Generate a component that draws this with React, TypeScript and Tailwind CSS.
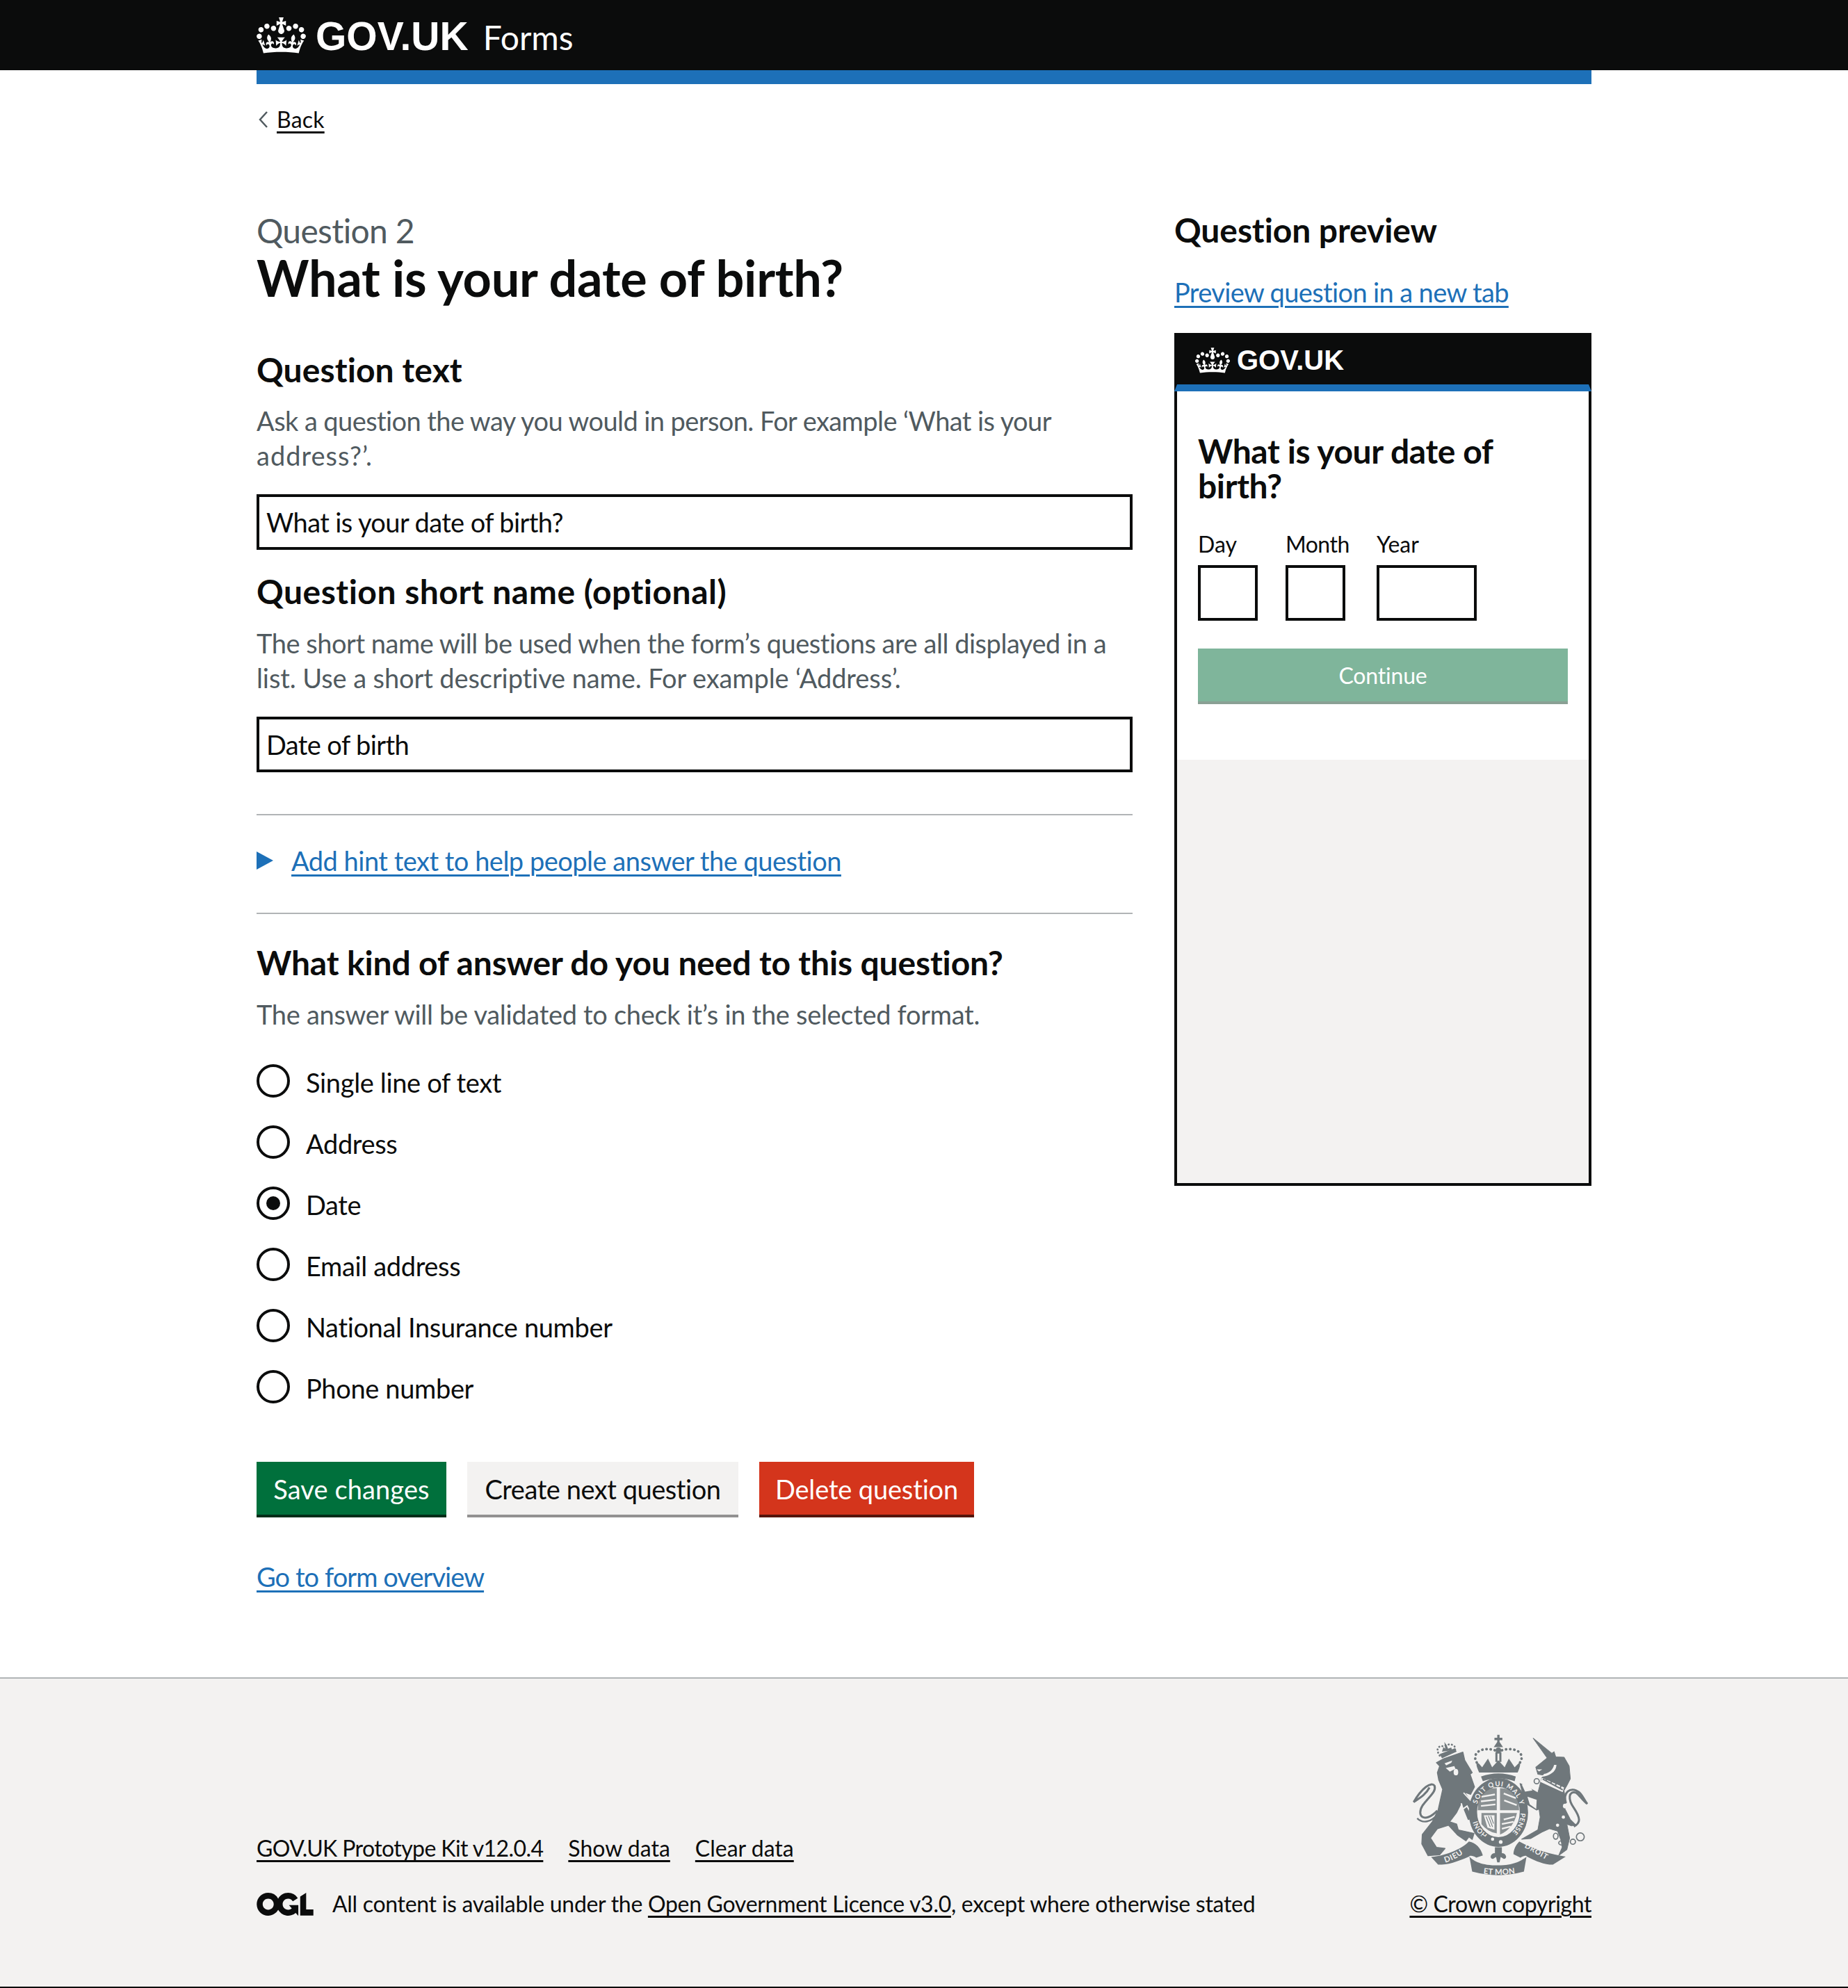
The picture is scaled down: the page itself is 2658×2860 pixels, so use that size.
import React from "react";

const crown = "M25 30.2c3.5 1.5 7.7-.2 9.1-3.7 1.5-3.6-.2-7.8-3.9-9.2-3.6-1.4-7.6.3-9.1 3.9-1.4 3.5.3 7.5 3.9 9zM9 39.5c3.6 1.5 7.8-.2 9.2-3.7 1.5-3.6-.2-7.8-3.9-9.1-3.6-1.5-7.6.2-9.1 3.8-1.4 3.5.3 7.5 3.8 9zM4.4 57.2c3.5 1.5 7.7-.2 9.1-3.8 1.5-3.6-.2-7.7-3.9-9.1-3.5-1.5-7.6.3-9.1 3.8-1.4 3.5.3 7.6 3.9 9.1zm38.3-21.4c3.5 1.5 7.7-.2 9.1-3.8 1.5-3.6-.2-7.7-3.9-9.1-3.6-1.5-7.6.3-9.1 3.8-1.3 3.6.4 7.7 3.9 9.1zm64.4-5.6c-3.6 1.5-7.8-.2-9.1-3.7-1.5-3.6.2-7.8 3.8-9.2 3.6-1.4 7.7.3 9.2 3.9 1.3 3.5-.4 7.5-3.9 9zm15.9 9.3c-3.6 1.5-7.7-.2-9.1-3.7-1.5-3.6.2-7.8 3.7-9.1 3.6-1.5 7.7.2 9.2 3.8 1.5 3.5-.3 7.5-3.8 9zm4.7 17.7c-3.6 1.5-7.8-.2-9.2-3.8-1.5-3.6.2-7.7 3.9-9.1 3.6-1.5 7.7.3 9.2 3.8 1.3 3.5-.4 7.6-3.9 9.1zM89.3 35.8c-3.6 1.5-7.8-.2-9.2-3.8-1.4-3.6.2-7.7 3.9-9.1 3.6-1.5 7.7.3 9.2 3.8 1.4 3.6-.3 7.7-3.9 9.1zM69.7 17.7l8.9 4.7V9.3l-8.9 2.8c-.2-.3-.5-.6-.9-.9L72.4 0H59.6l3.6 11.2c-.3.3-.6.5-.9.9l-8.8-2.8v13.1l8.8-4.7c.3.3.6.7.9.9l-5 15.4v.1c-.2.8-.4 1.6-.4 2.4 0 4.1 3.1 7.5 7 8.1h.2c.3 0 .7.1 1 .1.4 0 .7 0 1-.1h.2c4-.6 7.1-4.1 7.1-8.1 0-.8-.1-1.7-.4-2.4V34l-5.1-15.4c.4-.2.7-.6 1-.9zM66 92.8c16.9 0 32.8 1.1 47.1 3.2 4-16.9 8.9-26.7 14-33.5l-9.6-3.4c1 4.9 1.1 7.2 0 10.2-1.5-1.4-3-4.3-4.2-8.7L108.6 76c2.8-2 5-3.2 7.5-3.3-4.4 9.4-10 11.9-13.6 11.2-4.3-.8-6.3-4.6-5.6-7.9 1-4.7 5.7-5.9 8-.5 4.3-8.7-3-11.4-7.6-8.8 7.1-7.2 7.9-13.5 2.1-21.1-8 6.1-8.1 12.3-4.5 20.8-4.7-5.4-12.1-2.5-9.5 6.2 3.4-5.2 7.9-2 7.2 3.1-.6 4.3-6.4 7.8-13.5 7.2-10.3-.9-10.9-8-11.2-13.8 2.5-.5 7.1 1.8 11 7.3L80.2 60c-4.1 4.4-8 5.3-12.3 5.4 1.4-4.4 8-11.6 8-11.6H55.5s6.4 7.2 7.9 11.6c-4.2-.1-8-1-12.3-5.4l1.4 16.4c3.9-5.5 8.5-7.7 10.9-7.3-.3 5.8-.9 12.8-11.1 13.8-7.2.6-12.9-2.9-13.5-7.2-.7-5 3.8-8.3 7.1-3.1 2.7-8.7-4.6-11.6-9.4-6.2 3.7-8.5 3.6-14.7-4.6-20.8-5.8 7.6-5 13.9 2.2 21.1-4.7-2.6-11.9.1-7.7 8.8 2.3-5.5 7.1-4.2 8.1.5.7 3.3-1.3 7.1-5.7 7.9-3.5.7-9-1.8-13.5-11.2 2.5.1 4.7 1.3 7.5 3.3l-4.7-15.4c-1.2 4.4-2.7 7.2-4.3 8.7-1.1-3-.9-5.3 0-10.2l-9.5 3.4c5 6.9 9.9 16.7 14 33.5 14.8-2.1 30.8-3.2 47.7-3.2z";

const Crown = ({ w, h }: { w: number; h: number }) => (
  <svg viewBox="0 0 132 97" width={w} height={h} className="shrink-0 text-white">
    <path fill="currentColor" fillRule="evenodd" d={crown} />
  </svg>
);

const Ogl = () => (
  <svg viewBox="0 0 483.2 195.7" width="82" height="33" className="shrink-0 text-[#0b0c0c]">
    <path fill="currentColor" d="M421.5 142.8V.1l-50.7 32.3v161.1h112.4v-50.7zm-122.3-9.6A47.12 47.12 0 0 1 221 97.8c0-26 21.1-47.1 47.1-47.1 16.7 0 31.4 8.7 39.7 21.8l42.7-27.2A97.63 97.63 0 0 0 268.1 0c-36.5 0-68.3 20.1-85.1 49.7A98 98 0 0 0 97.8 0C43.9 0 0 43.9 0 97.8s43.9 97.8 97.8 97.8c36.5 0 68.3-20.1 85.1-49.7a97.76 97.76 0 0 0 149.6 25.4l19.4 22.2h3v-87.8h-80l24.3 27.5zM97.8 145c-26 0-47.1-21.1-47.1-47.1s21.1-47.1 47.1-47.1 47.2 21 47.2 47S123.8 145 97.8 145" />
  </svg>
);

const G = "#6f777b";
const BG = "#f3f2f1";
const tf = { fontFamily: "Lato, sans-serif", fontWeight: 700, fill: BG };
const Arms = () => (
  <svg viewBox="150 100 770 620" width="257" height="207" className="shrink-0 mr-[2px]" fill={G}>
    <defs>
      <path id="ringTop" d="M429 438 A96 112 0 0 1 621 438" />
      <path id="ringSide" d="M621 442 A96 112 0 0 1 560 542" />
      <path id="ringBot" d="M478 536 A96 112 0 0 1 429 446" />
      <path id="rbL" d="M296 656 Q350 640 398 598" />
      <path id="rbC" d="M438 700 Q525 716 612 700" />
      <path id="rbR" d="M636 590 Q700 625 760 660" />
    </defs>
    {/* lion crown */}
    <path d="M272 195 C252 165 268 150 290 155 C310 140 345 145 338 172" fill="none" stroke={G} strokeWidth="8" strokeLinecap="round" strokeDasharray="1 13" />
    <path d="M272 188 L338 163 L345 178 L282 206 Z" />
    <path d="M282 178 L288 158 L296 165 L292 136 L302 150 L308 165 L322 160 L325 172 Z" />
    {/* lion body */}
    <path d="M258 225 L290 208 L372 180 L380 215 L412 268 L403 275 L422 330 L405 362 L378 352 L428 425 L416 462 L395 470 L378 428 L366 398 L345 440 L315 480 L345 490 L352 515 L420 530 L412 556 L398 545 L385 562 L350 538 L310 495 L262 510 L232 550 L258 590 L295 595 L272 622 L222 626 L195 575 L197 535 L240 480 L265 430 L285 340 L268 300 L262 268 L272 240 Z" stroke={G} strokeWidth="4" strokeLinejoin="round" />
    <path d="M293 228 L326 216 L322 226 L300 237 Z M298 248 L335 240 L340 252 L316 264 Z" fill={BG} />
    <ellipse cx="342" cy="266" rx="10" ry="14" fill={BG} />
    <path d="M262 432 C205 490 170 455 198 410 C230 368 258 350 250 325 C235 305 195 335 160 395 C195 372 215 358 228 332" fill="none" stroke={G} strokeWidth="9" />
    <path d="M175 465 C200 490 235 480 262 450" fill="none" stroke={G} strokeWidth="7" />
    <path d="M375 355 L425 410" stroke={BG} strokeWidth="5" />
    <path d="M365 400 L372 425 L390 412 L402 435" stroke={BG} strokeWidth="6" fill="none" />
    {/* centre crown */}
    <path d="M520 105 H530 V118 H542 V128 H530 V136 L545 158 H505 L520 136 V128 H508 V118 H520 Z" />
    <circle cx="525" cy="172" r="12" />
    <rect x="512" y="180" width="26" height="42" />
    <rect x="521" y="186" width="8" height="32" fill={BG} />
    <path d="M432 225 C405 180 460 155 510 172 M618 225 C645 180 590 155 540 172" fill="none" stroke={G} strokeWidth="11" strokeLinecap="round" strokeDasharray="1 17" />
    <path d="M442 268 C430 240 425 225 440 228 L455 245 L480 208 L498 245 L525 215 L552 245 L570 208 L595 245 L612 228 C622 225 620 240 608 268 Z" />
    <path d="M450 285 Q525 258 600 285 L595 305 Q525 282 458 305 Z" />
    {/* garter */}
    <ellipse cx="525" cy="440" rx="128" ry="148" />
    <ellipse cx="525" cy="438" rx="92" ry="108" fill={BG} />
    <g opacity="0.8">
      <path d="M440 350 Q480 335 518 335 L518 430 L436 430 Z M532 335 Q570 335 610 360 L614 430 L532 430 Z M452 442 L518 442 L518 530 Q480 525 452 490 Z M532 442 L605 442 Q590 510 532 535 Z" />
    </g>
    <path d="M452 372 L510 362 M450 392 L512 385 M450 412 L512 405 M548 358 L600 378 M550 388 L604 408 M548 470 L595 458 M540 490 L590 480 M540 510 L578 500" stroke={BG} strokeWidth="7" />
    <path d="M462 452 L508 452 L508 514 L478 505 Z" fill={BG} />
    <path d="M472 458 L490 502 M482 455 L500 502 M492 455 L504 488" stroke={G} strokeWidth="3" />
    <text fontSize="29" {...tf}><textPath href="#ringTop" startOffset="34" textLength="262">SOIT QUI MAL Y</textPath></text>
    <text fontSize="29" {...tf} letterSpacing="1"><textPath href="#ringSide">PENSE</textPath></text>
    <text fontSize="29" {...tf}><textPath href="#ringBot">HONI</textPath></text>
    <path d="M450 535 C470 592 580 592 600 535 L580 545 C555 565 495 565 470 545 Z" />
    <circle cx="500" cy="555" r="7" fill={BG} />
    <circle cx="535" cy="567" r="8" fill={BG} />
    {/* unicorn */}
    <path d="M675 120 L755 185 L765 178 L772 200 L808 202 L830 240 L835 295 L822 320 L808 345 L815 400 L812 425 L835 470 L860 495 L840 498 L820 490 L832 550 L820 600 L785 625 L800 590 L795 560 L780 520 L745 510 L712 525 L665 552 L625 555 L660 535 L695 515 L705 460 L700 425 L690 430 L640 400 L618 315 L650 330 L695 355 L712 290 L765 250 L725 280 L695 275 L686 245 L735 205 Z" stroke={G} strokeWidth="3" strokeLinejoin="round" />
    <path d="M775 235 C775 265 745 282 712 286 L722 274 C745 270 760 255 765 235 Z M690 254 L714 254 L700 263 Z" fill={BG} />
    <path d="M650 372 L690 385 L688 425 L660 405 Z M626 320 L650 312 L672 345 L640 350 Z" fill={BG} />
    <path d="M712 290 L808 332 L802 352 L706 308 Z" fill={BG} />
    <path d="M716 296 L802 342 M730 306 L736 288 M750 316 L756 300 M770 326 L776 310 M790 338 L796 322" stroke={G} strokeWidth="6" />
    <circle cx="690" cy="305" r="11" fill={BG} stroke={G} strokeWidth="5" />
    <circle cx="813" cy="412" r="10" fill={BG} />
    <circle cx="805" cy="460" r="7" fill={BG} />
    <circle cx="780" cy="495" r="7" fill={BG} />
    <g fill="none" stroke={G} strokeWidth="5">
      <ellipse cx="772" cy="542" rx="10" ry="13" />
      <ellipse cx="797" cy="571" rx="12" ry="9" />
      <circle cx="846" cy="566" r="11" />
      <circle cx="878" cy="545" r="17" />
    </g>
    <path d="M816 400 C802 350 835 335 860 345 C885 355 890 380 908 403 C885 385 875 365 860 355 C825 345 825 385 850 420 C880 465 880 485 850 500" fill="none" stroke={G} strokeWidth="9" />
    {/* ribbon */}
    <path d="M235 632 C310 625 375 590 398 565 C430 572 448 592 458 625 L430 635 C415 625 402 625 398 630 C340 655 310 665 265 665 Z" />
    <path d="M815 630 C750 620 680 600 615 565 C600 580 590 600 590 620 L620 635 C635 625 645 625 648 630 C690 650 720 665 760 665 Z" />
    <path d="M400 630 C420 650 450 668 525 668 C590 668 620 650 646 632 L635 695 Q525 725 412 695 Z" />
    <text fontSize="34" {...tf} letterSpacing="2"><textPath href="#rbL">DIEU</textPath></text>
    <text fontSize="34" {...tf} letterSpacing="1"><textPath href="#rbC" startOffset="22">ET MON</textPath></text>
    <text fontSize="32" {...tf} letterSpacing="2"><textPath href="#rbR">DROIT</textPath></text>
    {/* fleur */}
    <path d="M510 590 L540 590 L540 615 C560 615 565 640 548 640 L535 632 L530 655 L520 655 L515 632 L502 640 C485 640 490 615 510 615 Z" />
  </svg>
);

const H2 = ({ children, className = "" }: { children: React.ReactNode; className?: string }) => (
  <h2 className={`h-[50px] text-[48px] leading-[47px] font-bold whitespace-nowrap text-[#0b0c0c] ${className}`}>{children}</h2>
);

const Field = ({ value, className = "" }: { value: string; className?: string }) => (
  <input
    readOnly
    value={value}
    className={`block w-full h-[80px] border-4 border-[#0b0c0c] px-[10px] text-[38px] text-[#0b0c0c] tracking-[-0.6px] bg-white outline-none ${className}`}
  />
);

const Radio = ({ label, checked }: { label: string; checked?: boolean }) => (
  <div className="flex items-center h-[48px] gap-[23px]">
    <span className="w-[48px] h-[48px] rounded-full border-4 border-[#0b0c0c] flex items-center justify-center shrink-0">
      {checked && <span className="w-[20px] h-[20px] rounded-full bg-[#0b0c0c]" />}
    </span>
    <span className="text-[38px] leading-[50px] mt-[3px] text-[#0b0c0c] tracking-[-0.35px]">{label}</span>
  </div>
);

const Btn = ({ label, className }: { label: string; className: string }) => (
  <button className={`h-[80px] pt-[1px] text-[38px] leading-[50px] border-b-4 whitespace-nowrap ${className}`}>{label}</button>
);

const DateBox = ({ label, w, gap, track = "" }: { label: string; w: string; gap: string; track?: string }) => (
  <div className={`flex flex-col ${w} ${gap}`}>
    <span className={`h-[50px] text-[32px] leading-[52px] text-[#0b0c0c] whitespace-nowrap ${track}`}>{label}</span>
    <span className="mt-[6px] h-[80px] border-4 border-[#0b0c0c] bg-white block" />
  </div>
);

const link = "underline underline-offset-[5px] decoration-[3px]";
const logoFont = "font-['Liberation_Sans',Arial,sans-serif]";

export default function App() {
  return (
    <div className="w-[2658px] h-[2860px] bg-white text-[#0b0c0c] flex flex-col font-['Lato','Noto_Sans',sans-serif]">
      <header className="h-[101px] bg-[#0b0c0c] shrink-0">
        <div className="w-[1920px] mx-auto h-full flex items-center text-white">
          <Crown w={71} h={52} />
          <span className={`ml-[14px] mt-[3px] text-[57px] font-bold leading-none ${logoFont}`}>GOV.UK</span>
          <span className="ml-[21px] text-[48px] leading-none mt-[6px]">Forms</span>
        </div>
      </header>
      <div className="w-[1920px] mx-auto flex-1 min-h-0">
        <div className="h-[20px] bg-[#1d70b8]" />
        <a className={`mt-[31px] h-[40px] flex items-center gap-[12px] text-[32px] leading-[40px] text-[#0b0c0c] tracking-[0.2px] ${link}`}>
          <svg width="15" height="24" viewBox="0 0 15 24" className="shrink-0 ml-[2px]"><path d="M13 1 L3 12 L13 23" fill="none" stroke="#505a5f" strokeWidth="2.5" /></svg>
          Back
        </a>
        <main className="pt-[115px] flex gap-[60px]">
          <div className="w-[1260px] shrink-0">
            <div className="h-[50px] w-fit text-[48px] leading-[50px] text-[#505a5f] tracking-[-0.7px]">Question 2</div>
            <h1 className="mt-[4px] h-[80px] text-[72px] leading-[77px] font-bold tracking-[-0.22px] whitespace-nowrap">What is your date of birth?</h1>
            <H2 className="mt-[67px] tracking-[0.1px]">Question text</H2>
            <p className="mt-[22px] text-[38px] leading-[50px] text-[#505a5f] tracking-[-0.58px]">Ask a question the way you would in person. For example ‘What is your<br /><span className="tracking-[1px]">address?’.</span></p>
            <Field className="mt-[31px]" value="What is your date of birth?" />
            <H2 className="mt-[36px] tracking-[0.5px]">Question short name (optional)</H2>
            <p className="mt-[23px] text-[38px] leading-[50px] text-[#505a5f] tracking-[-0.47px] whitespace-nowrap">The short name will be used when the form’s questions are all displayed in a<br /><span className="tracking-[-0.1px]">list. Use a short descriptive name. For example ‘Address’.</span></p>
            <Field className="mt-[31px]" value="Date of birth" />
            <hr className="mt-[60px] border-t-2 border-[#b1b4b6]" />
            <div className="mt-[40px] h-[50px] flex items-center gap-[26px] text-[38px] leading-[50px]">
              <svg width="24" height="26" viewBox="0 0 24 26" className="shrink-0"><path d="M0 0 L24 13 L0 26 Z" fill="#1d70b8" /></svg>
              <a className={`text-[#1d70b8] tracking-[-0.5px] ${link}`}>Add hint text to help people answer the question</a>
            </div>
            <hr className="mt-[50px] border-t-2 border-[#b1b4b6]" />
            <H2 className="mt-[46px] tracking-[-0.15px]">What kind of answer do you need to this question?</H2>
            <p className="mt-[23px] text-[38px] leading-[50px] text-[#505a5f] tracking-[-0.3px]">The answer will be validated to check it’s in the selected format.</p>
            <div className="mt-[47px] flex flex-col gap-[40px]">
              <Radio label="Single line of text" />
              <Radio label="Address" />
              <Radio label="Date" checked />
              <Radio label="Email address" />
              <Radio label="National Insurance number" />
              <Radio label="Phone number" />
            </div>
            <div className="mt-[84px] flex gap-[30px]">
              <Btn label="Save changes" className="w-[273px] tracking-[0.1px] bg-[#00703c] text-white border-[#002d18]" />
              <Btn label="Create next question" className="w-[390px] tracking-[-0.45px] bg-[#f3f2f1] text-[#0b0c0c] border-[#929191]" />
              <Btn label="Delete question" className="w-[309px] tracking-[-0.15px] bg-[#d4351c] text-white border-[#55150b]" />
            </div>
            <a className={`block mt-[60px] text-[38px] leading-[50px] text-[#1d70b8] tracking-[-0.95px] ${link}`}>Go to form overview</a>
          </div>
          <aside className="w-[600px] shrink-0">
            <H2 className="tracking-[-0.1px]">Question preview</H2>
            <a className={`block mt-[38px] text-[38px] leading-[50px] text-[#1d70b8] tracking-[-0.63px] ${link}`}>Preview question in a new tab</a>
            <div className="mt-[34px] h-[1227px] flex flex-col">
              <div className="h-[84px] bg-[#0b0c0c] border-4 border-[#0b0c0c] border-b-[10px] border-b-[#1d70b8] flex items-center pl-[26px] text-white shrink-0">
                <Crown w={50} h={37} />
                <span className={`ml-[10px] text-[40px] font-bold leading-none ${logoFont}`}>GOV.UK</span>
              </div>
              <div className="flex-1 flex flex-col border-x-4 border-b-4 border-[#0b0c0c] bg-[#f3f2f1]">
                <div className="bg-white px-[30px] pt-[61px] pb-[80px]">
                  <h3 className="text-[48px] leading-[50px] font-bold tracking-[-0.4px]">What is your date of<br />birth?</h3>
                  <div className="mt-[33px] flex">
                    <DateBox label="Day" w="w-[86px]" gap="mr-[40px]" />
                    <DateBox label="Month" w="w-[86px]" gap="mr-[45px]" track="tracking-[-0.5px]" />
                    <DateBox label="Year" w="w-[144px]" gap="" />
                  </div>
                  <button className="mt-[40px] w-full h-[80px] pt-[2px] bg-[#7fb59b] border-b-4 border-[#8aa094] text-white text-[32px] leading-[50px] tracking-[-0.2px]">Continue</button>
                </div>
              </div>
            </div>
          </aside>
        </main>
      </div>
      <footer className="h-[447px] shrink-0 bg-[#f3f2f1] border-t-2 border-t-[#b1b4b6] border-b-2 border-b-[#0b0c0c]">
        <div className="w-[1920px] mx-auto h-full flex items-end justify-between pb-[99px]">
          <div className="text-[32px] leading-[40px] text-[#0b0c0c]">
            <div className="flex gap-[36px]">
              <a className={`tracking-[-0.6px] ${link}`}>GOV.UK Prototype Kit v12.0.4</a>
              <a className={link}>Show data</a>
              <a className={link}>Clear data</a>
            </div>
            <div className="mt-[40px] flex items-center gap-[27px]">
              <Ogl />
              <span className="tracking-[-0.3px]">All content is available under the <a className={link}>Open Government Licence v3.0</a>, except where otherwise stated</span>
            </div>
          </div>
          <div className="flex flex-col items-end text-[32px] leading-[40px] gap-[18px]">
            <Arms />
            <a className={`tracking-[-0.4px] ${link}`}>© Crown copyright</a>
          </div>
        </div>
      </footer>
    </div>
  );
}
